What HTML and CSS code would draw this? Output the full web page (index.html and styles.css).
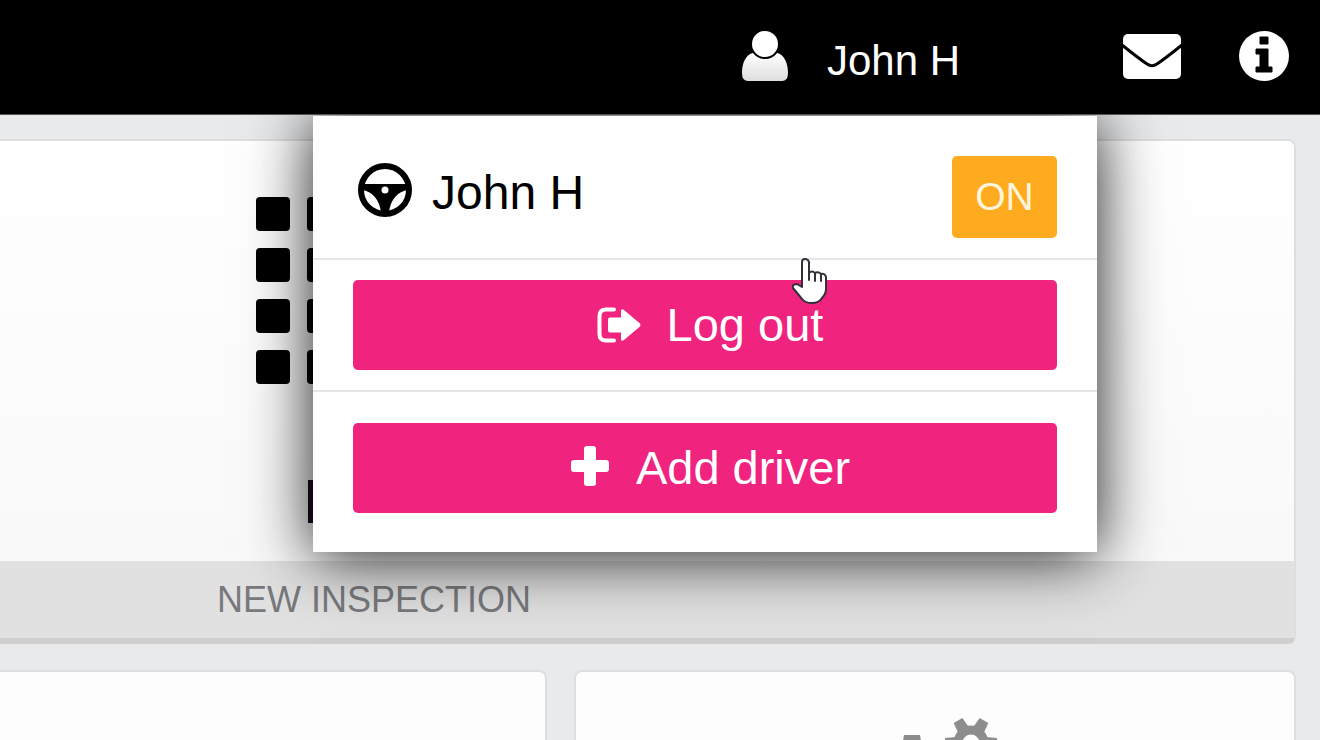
FILE: index.html
```html
<!DOCTYPE html>
<html lang="en">
<head>
<meta charset="utf-8">
<title>Driver menu</title>
<link rel="stylesheet" href="styles.css">
</head>
<body>
<header class="topbar">
  <button class="topbar-btn user" type="button" aria-expanded="true">
    <svg class="icon-user" viewBox="0 0 48 52" aria-hidden="true">
      <defs><linearGradient id="bust" x1="0" y1="0" x2="0" y2="1"><stop offset="0" stop-color="#fff"/><stop offset="1" stop-color="#dedede"/></linearGradient></defs>
      <path fill="url(#bust)" d="M12 23C5 24 1 33 1 43q0 8 6 8h34q6 0 6-8c0-10-4-19-11-20C33 27 29 29 24 29S15 27 12 23z"/>
      <circle cx="24" cy="14" r="13" fill="#fff"/>
    </svg>
    <span>John H</span>
  </button>
  <button class="topbar-btn" type="button" aria-label="Messages">
    <svg class="icon-mail" viewBox="0 0 60 47" aria-hidden="true">
      <rect x="1" y="1" width="58" height="45" rx="5" fill="#fff"/>
      <path d="M0 12C10 20 19 27 25 31q5 3.500 10 0C41 27 50 20 60 12" fill="none" stroke="#000" stroke-width="3"/>
    </svg>
  </button>
  <button class="topbar-btn" type="button" aria-label="Information">
    <svg class="icon-info" viewBox="0 0 52 52" aria-hidden="true">
      <circle cx="26" cy="26" r="25" fill="#fff"/>
      <path d="M22 7h8v7h-8zM18 19h12v18h4v5H18v-5h4V24h-4z" fill="#000" stroke="#000" stroke-linejoin="round"/>
    </svg>
  </button>
</header>

<main class="board">
  <section class="card inspection">
    <div class="card-body">
      <svg class="icon-keypad" viewBox="0 0 136 328" aria-hidden="true">
        <defs><pattern id="keys" width="51" height="51" patternUnits="userSpaceOnUse"><rect width="34" height="34" rx="4"/></pattern></defs>
        <rect width="136" height="188" fill="url(#keys)"/>
        <rect x="52" y="283" width="8" height="43" fill="#1d0c25"/>
      </svg>
    </div>
    <h2 class="card-title">NEW INSPECTION</h2>
  </section>
  <div class="card-row">
    <section class="card side"></section>
    <section class="card settings">
      <svg class="icon-cogs" viewBox="0 0 126 100" aria-hidden="true">
        <defs>
          <g id="tooth-s"><path d="M-6-15L-5-26H5L6-15z"/></g>
          <g id="tooth-l"><path d="M-10-26L-8-38H8L10-26z"/></g>
        </defs>
        <g fill="#8d8d8d">
          <g transform="translate(97 26)">
            <circle r="13" fill="none" stroke="#8d8d8d" stroke-width="9"/>
            <use href="#tooth-s" transform="rotate(30)"/><use href="#tooth-s" transform="rotate(90)"/><use href="#tooth-s" transform="rotate(150)"/>
            <use href="#tooth-s" transform="rotate(210)"/><use href="#tooth-s" transform="rotate(270)"/><use href="#tooth-s" transform="rotate(330)"/>
          </g>
          <g transform="translate(38 56)">
            <circle r="21" fill="none" stroke="#8d8d8d" stroke-width="14"/>
            <use href="#tooth-l"/><use href="#tooth-l" transform="rotate(45)"/><use href="#tooth-l" transform="rotate(90)"/><use href="#tooth-l" transform="rotate(135)"/>
            <use href="#tooth-l" transform="rotate(180)"/><use href="#tooth-l" transform="rotate(225)"/><use href="#tooth-l" transform="rotate(270)"/><use href="#tooth-l" transform="rotate(315)"/>
          </g>
        </g>
      </svg>
    </section>
  </div>
</main>

<div class="menu">
  <div class="menu-row driver">
    <svg class="icon-wheel" viewBox="0 0 54 54" aria-hidden="true">
      <circle cx="27" cy="27" r="24" fill="none" stroke="#000" stroke-width="6"/>
      <path d="M4 21H50V27C40 28 32 37 31 50H23C22 37 14 28 4 27z"/>
      <circle cx="27" cy="27" r="3.500" fill="#fff"/>
    </svg>
    <span class="driver-name">John H</span>
    <button class="toggle" type="button" aria-pressed="true">ON</button>
  </div>
  <div class="menu-row logout">
    <button class="action" type="button">
      <svg class="icon-exit" viewBox="0 0 44 36" aria-hidden="true">
        <path d="M17 2.500H9Q2.500 2.500 2.500 9V27Q2.500 33.500 9 33.500H17" fill="none" stroke="#fff" stroke-width="4" stroke-linecap="round"/>
        <path d="M11 12.500q0-2 2-2H24V4q0-3 3-1L43 16.500q1 1.500 0 3L27 33q-3 2-3-1V25.500H13q-2 0-2-2z" fill="#fff"/>
      </svg>
      <span>Log out</span>
    </button>
  </div>
  <div class="menu-row add">
    <button class="action" type="button">
      <svg class="icon-plus" viewBox="0 0 40 40" aria-hidden="true">
        <path d="M17 0h6q3 0 3 3v11h10q3 0 3 3v6q0 3-3 3H26v11q0 3-3 3h-6q-3 0-3-3V26H4q-3 0-3-3v-6q0-3 3-3h10V3q0-3 3-3z" fill="#fff"/>
      </svg>
      <span>Add driver</span>
    </button>
  </div>
</div>

<svg class="pointer" viewBox="0 0 36 48" aria-hidden="true">
  <path d="M10 5q0-3 3-3t4 3V16q3-3 6 0 3-2 6 1 4-1 5 3V32q0 5-4 9-3 5-10 5T10 42L1 31q-1-4 4-4l5 3z" fill="#fff" stroke="#33303a" stroke-width="2" stroke-linejoin="round"/>
  <path d="M17 15v8M23 16v8M29 17v7" fill="none" stroke="#33303a" stroke-width="2" stroke-linecap="round"/>
</svg>
</body>
</html>
```
FILE: styles.css
```css
* { box-sizing: border-box; }

body {
  margin: 0;
  height: 100vh;
  overflow: hidden;
  position: relative;
  display: flex;
  flex-direction: column;
  background: #e9eaec;
  font-family: "Liberation Sans", Arial, sans-serif;
}

button {
  border: 0;
  padding: 0;
  font-family: inherit;
  cursor: pointer;
}

svg { display: block; flex: none; }

.topbar {
  position: relative;
  z-index: 3;
  flex: none;
  display: flex;
  justify-content: flex-end;
  align-items: center;
  gap: 56px;
  height: 115px;
  padding: 0 30px 2px 0;
  background: #000;
  border-bottom: 1px solid #555;
}

.topbar-btn {
  display: flex;
  align-items: center;
  background: none;
  color: #fff;
}

.user {
  gap: 38px;
  margin-right: 106px;
  font-size: 42px;
  line-height: 60px;
}

.user span { padding-top: 10px; }

.icon-user { width: 48px; height: 52px; }
.icon-mail { width: 60px; height: 47px; }
.icon-info { width: 52px; height: 52px; }

.board {
  flex: 1;
  min-height: 0;
  display: flex;
  flex-direction: column;
  gap: 26px;
  padding: 24px 24px 0 0;
}

.card {
  border: 2px solid #dddee0;
  border-radius: 8px;
  background: linear-gradient(#fff, #f8f8f8);
}

.inspection {
  flex: none;
  border-left: 0;
  border-bottom: 6px solid #cfcfcf;
  border-radius: 0 8px 8px 0;
}

.card-body { padding: 56px 0 36px 256px; }

.icon-keypad { width: 136px; height: 328px; }

.card-title {
  margin: 0;
  padding: 0 0 0 217px;
  background: #e1e1e1;
  color: #77797c;
  font-size: 36px;
  font-weight: 400;
  line-height: 77px;
}

.card-row {
  flex: 1;
  min-height: 0;
  display: grid;
  grid-template-columns: 547fr 722fr;
  grid-template-rows: minmax(0, 1fr);
  gap: 27px;
}

.card-row .card {
  border-bottom: 0;
  border-bottom-left-radius: 0;
  border-bottom-right-radius: 0;
  background: #fdfdfd;
  overflow: hidden;
}

.card-row .side {
  border-left: 0;
  border-top-left-radius: 0;
}

.settings {
  display: flex;
  justify-content: center;
  padding: 45px 0 0 4px;
}

.icon-cogs { width: 126px; height: 100px; }

.menu {
  position: absolute;
  z-index: 2;
  top: 116px;
  right: 223px;
  width: 784px;
  background: #fefefe;
  box-shadow: 0 4px 60px rgba(0, 0, 0, 0.9);
}

.menu-row { padding: 20px 40px; }

.menu-row + .menu-row { border-top: 2px solid #e6e6e6; }

.driver {
  display: flex;
  align-items: center;
  gap: 20px;
  padding: 40px 40px 20px 45px;
}

.icon-wheel { width: 54px; height: 54px; margin-bottom: 14px; }

.driver-name {
  flex: 1;
  margin-bottom: 8px;
  color: #000;
  font-size: 48px;
  line-height: 56px;
}

.toggle {
  width: 105px;
  height: 82px;
  border-radius: 5px;
  background: #feab20;
  color: #fff4dc;
  font-size: 39px;
}

.add { padding: 31px 40px 39px; }

.action {
  display: flex;
  justify-content: center;
  align-items: center;
  gap: 26px;
  width: 100%;
  height: 90px;
  padding-left: 10px;
  border-radius: 5px;
  background: #f0237f;
  color: #fff;
  font-size: 47px;
  line-height: 60px;
}

.icon-exit { width: 44px; height: 36px; }
.icon-plus { width: 40px; height: 40px; margin-bottom: 4px; }

.pointer {
  position: absolute;
  z-index: 4;
  top: 257px;
  left: 792px;
  width: 36px;
  height: 48px;
}
```
